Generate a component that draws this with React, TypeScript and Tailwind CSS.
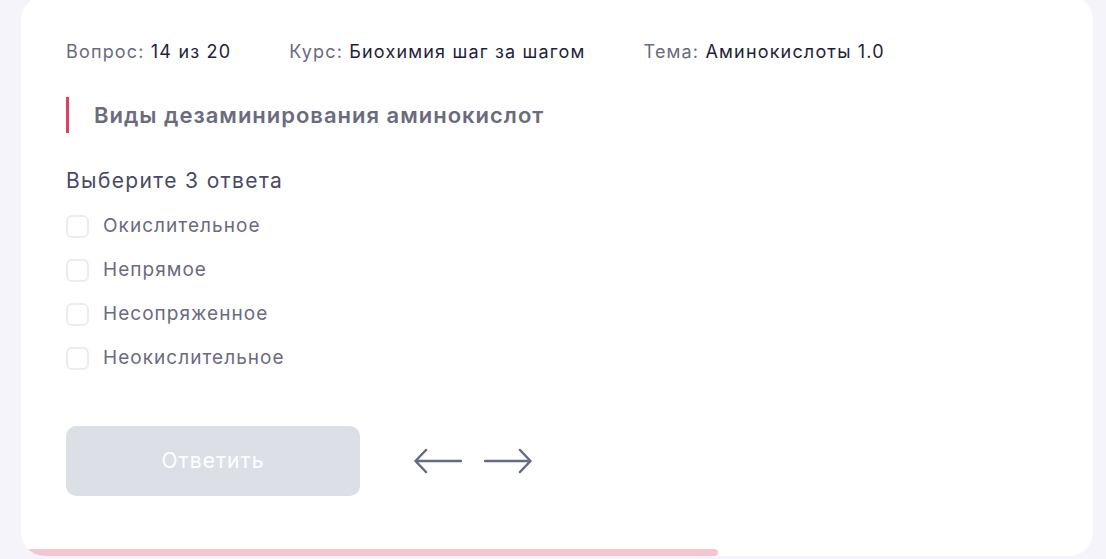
import React, { useState } from 'react';

const OPTIONS = ['Окислительное', 'Непрямое', 'Несопряженное', 'Неокислительное'];

const App: React.FC = () => {
  const [checked, setChecked] = useState<number[]>([]);

  const toggle = (i: number) => {
    setChecked(prev => (prev.includes(i) ? prev.filter(x => x !== i) : [...prev, i]));
  };

  return (
    <div className="h-[559px] w-full overflow-hidden bg-[#f4f4fa] pl-[21px] pr-[13px] font-['Inter',sans-serif]">
      <div className="-mt-[4px] flex h-[560px] flex-col overflow-hidden rounded-[24px] bg-white">
        <div className="flex-1 pl-[45px] pt-[44px]">
          {/* meta line */}
          <div className="flex h-6 items-center gap-[58px] text-[18px] leading-6 tracking-[0.065em]">
            <p>
              <span className="text-[#6b6b80]">Вопрос: </span>
              <span className="text-[#1e1e3c]">14 из 20</span>
            </p>
            <p>
              <span className="text-[#6b6b80]">Курс: </span>
              <span className="text-[#1e1e3c]">Биохимия шаг за шагом</span>
            </p>
            <p>
              <span className="text-[#6b6b80]">Тема: </span>
              <span className="text-[#1e1e3c]">Аминокислоты 1.0</span>
            </p>
          </div>

          {/* question */}
          <div className="mt-[33px] flex h-9 items-center border-l-[3px] border-[#e0405f] pl-[25px]">
            <h2 className="text-[22px] font-semibold tracking-[0.045em] text-[#6b6b7e]">Виды дезаминирования аминокислот</h2>
          </div>

          <p className="mt-[34px] h-7 text-[21px] leading-7 tracking-[0.065em] text-[#4a4a66]">Выберите 3 ответа</p>

          <div className="mt-[9px] flex flex-col">
            {OPTIONS.map((opt, i) => (
              <label key={opt} className="flex h-[44px] cursor-pointer items-center gap-[14px]" onClick={() => toggle(i)}>
                <span
                  className={`h-[23px] w-[23px] rounded-[6px] border-2 ${
                    checked.includes(i) ? 'border-[#e0405f] bg-[#e0405f]' : 'border-[#ececee] bg-white'
                  }`}
                />
                <span className="text-[19px] tracking-[0.055em] text-[#6b6b80]">{opt}</span>
              </label>
            ))}
          </div>

          <div className="mt-[46px] flex items-center gap-[54px]">
            <button className="h-[70px] w-[294px] rounded-[10px] bg-[#dce0e6] text-[21px] tracking-[0.05em] text-white">Ответить</button>
            <div className="flex items-center gap-[22px] text-[#656a85]">
              <svg width="48" height="26" viewBox="0 0 48 26" fill="none" stroke="currentColor" strokeWidth="2.5" strokeLinecap="round" strokeLinejoin="round">
                <path d="M47 13H2M12 2L1.5 13L12 24" />
              </svg>
              <svg width="48" height="26" viewBox="0 0 48 26" fill="none" stroke="currentColor" strokeWidth="2.5" strokeLinecap="round" strokeLinejoin="round">
                <path d="M1 13H46M36 2L46.5 13L36 24" />
              </svg>
            </div>
          </div>
        </div>

        {/* progress */}
        <div className="h-[7px] w-full">
          <div className="h-full w-[697px] rounded-r-full bg-[#f4c6cf]" />
        </div>
      </div>
    </div>
  );
};

export default App;
